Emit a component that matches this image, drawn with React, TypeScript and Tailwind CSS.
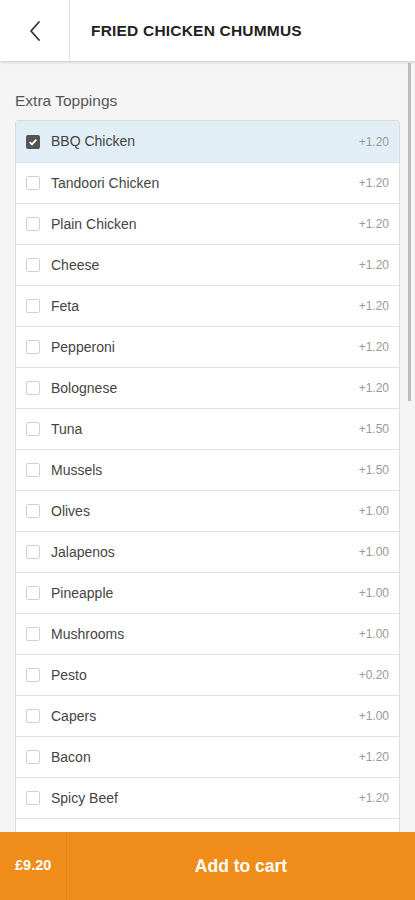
import React from 'react';

const toppings = [
  { name: 'BBQ Chicken', price: '+1.20', checked: true },
  { name: 'Tandoori Chicken', price: '+1.20' },
  { name: 'Plain Chicken', price: '+1.20' },
  { name: 'Cheese', price: '+1.20' },
  { name: 'Feta', price: '+1.20' },
  { name: 'Pepperoni', price: '+1.20' },
  { name: 'Bolognese', price: '+1.20' },
  { name: 'Tuna', price: '+1.50' },
  { name: 'Mussels', price: '+1.50' },
  { name: 'Olives', price: '+1.00' },
  { name: 'Jalapenos', price: '+1.00' },
  { name: 'Pineapple', price: '+1.00' },
  { name: 'Mushrooms', price: '+1.00' },
  { name: 'Pesto', price: '+0.20' },
  { name: 'Capers', price: '+1.00' },
  { name: 'Bacon', price: '+1.20' },
  { name: 'Spicy Beef', price: '+1.20' },
];

export default function App() {
  return (
    <div className="h-[900px] w-[415px] flex flex-col overflow-hidden bg-[#f5f5f5] font-['Liberation_Sans',Arial,sans-serif]">
      <header className="h-[61px] shrink-0 flex bg-white shadow-[0_1px_3px_rgba(0,0,0,0.2)] relative z-10">
        <button className="w-[70px] flex items-center justify-center border-r border-[#e0e0e0] text-[#333]">
          <svg width="14" height="22" viewBox="0 0 14 22" fill="none" stroke="currentColor" strokeWidth="1.8" strokeLinecap="round" strokeLinejoin="round">
            <path d="M11 2 L3 11 L11 20" />
          </svg>
        </button>
        <h1 className="flex items-center pl-[21px] text-[15.5px] font-bold text-[#222] tracking-[0.2px]">FRIED CHICKEN CHUMMUS</h1>
      </header>

      <main className="flex-1 overflow-hidden relative px-[15px]">
        <div className="absolute right-[4px] top-[2px] w-[3px] h-[338px] bg-[#bdbdbd]" />
        <p className="pt-[28px] pb-[8px] text-[15.5px] text-[#555]">Extra Toppings</p>
        <ul className="bg-white border border-[#dcdcdc] rounded-t-[3px]">
          {toppings.map((t, i) => (
            <li
              key={t.name}
              className={`h-[41px] flex items-center pl-[10px] pr-[10px] ${i > 0 ? 'border-t border-[#e2e2e2]' : ''} ${t.checked ? 'bg-[#e2eef5]' : ''}`}
            >
              {t.checked ? (
                <span className="w-[14px] h-[14px] rounded-[2px] bg-[#555] flex items-center justify-center">
                  <svg width="10" height="10" viewBox="0 0 10 10" fill="none" stroke="white" strokeWidth="1.8">
                    <path d="M1.8 5.2 L4 7.4 L8.3 2.6" />
                  </svg>
                </span>
              ) : (
                <span className="w-[14px] h-[14px] rounded-[2px] border border-[#d0d0d0] bg-white" />
              )}
              <span className="ml-[11px] text-[14px] text-[#444]">{t.name}</span>
              <span className="ml-auto text-[12px] text-[#999]">{t.price}</span>
            </li>
          ))}
          <li className="h-[41px] border-t border-[#e2e2e2]" />
        </ul>
      </main>

      <footer className="h-[68px] shrink-0 flex items-center bg-[#ef8c1a] text-white">
        <div className="w-[67px] h-full flex items-center pl-[15px] border-r border-[#e3831a] text-[14.5px] font-bold">£9.20</div>
        <button className="flex-1 h-full flex items-center justify-center text-[17.5px] font-bold">Add to cart</button>
      </footer>
    </div>
  );
}
